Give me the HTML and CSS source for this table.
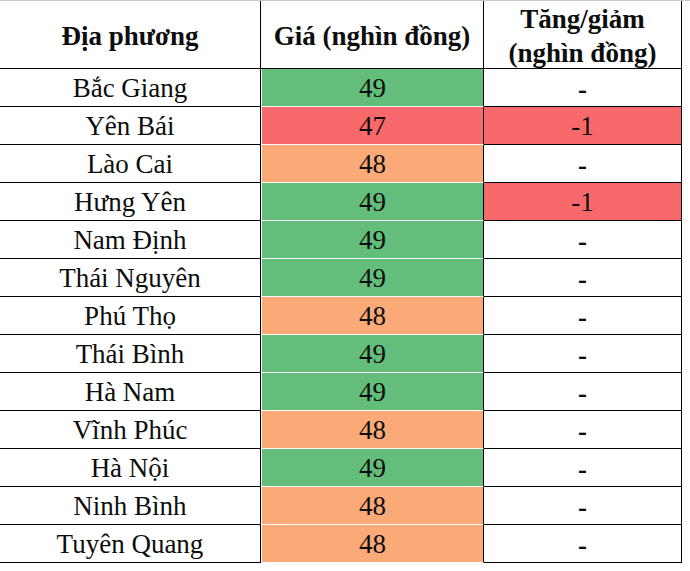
FILE: index.html
```html
<!DOCTYPE html>
<html>
<head>
<meta charset="utf-8">
<link rel="stylesheet" href="styles.css">
</head>
<body>
<div class="sheet">
  <div class="grid">
    <div class="cell c1 head">Địa phương</div>
    <div class="cell c2 head">Giá (nghìn đồng)</div>
    <div class="cell c3 head">Tăng/giảm<br>(nghìn đồng)</div>

    <div class="cell c1">Bắc Giang</div><div class="cell c2 green">49</div><div class="cell c3 dash">-</div>
    <div class="cell c1">Yên Bái</div><div class="cell c2 red">47</div><div class="cell c3 red">-1</div>
    <div class="cell c1">Lào Cai</div><div class="cell c2 orange">48</div><div class="cell c3 dash">-</div>
    <div class="cell c1">Hưng Yên</div><div class="cell c2 green">49</div><div class="cell c3 red">-1</div>
    <div class="cell c1">Nam Định</div><div class="cell c2 green">49</div><div class="cell c3 dash">-</div>
    <div class="cell c1">Thái Nguyên</div><div class="cell c2 green">49</div><div class="cell c3 dash">-</div>
    <div class="cell c1">Phú Thọ</div><div class="cell c2 orange">48</div><div class="cell c3 dash">-</div>
    <div class="cell c1">Thái Bình</div><div class="cell c2 green">49</div><div class="cell c3 dash">-</div>
    <div class="cell c1">Hà Nam</div><div class="cell c2 green">49</div><div class="cell c3 dash">-</div>
    <div class="cell c1">Vĩnh Phúc</div><div class="cell c2 orange">48</div><div class="cell c3 dash">-</div>
    <div class="cell c1">Hà Nội</div><div class="cell c2 green">49</div><div class="cell c3 dash">-</div>
    <div class="cell c1">Ninh Bình</div><div class="cell c2 orange">48</div><div class="cell c3 dash">-</div>
    <div class="cell c1">Tuyên Quang</div><div class="cell c2 orange">48</div><div class="cell c3 dash">-</div>
  </div>
</div>
</body>
</html>
```

FILE: styles.css
```css
html, body {
  margin: 0;
  padding: 0;
  background: #ffffff;
}
.sheet {
  width: 690px;
  height: 571px;
  background: #ffffff;
  border-top: 1px solid #c8c8c8;
  box-sizing: border-box;
}
.grid {
  display: grid;
  grid-template-columns: 261px 223px 198px;
  grid-template-rows: 68px repeat(13, 38px);
  font-family: "Liberation Serif", "Times New Roman", serif;
  font-size: 27px;
  color: #0d0d0d;
}
.cell {
  display: flex;
  align-items: center;
  justify-content: center;
  text-align: center;
  box-sizing: border-box;
  border-bottom: 1px solid #000;
  line-height: 1;
  padding-top: 1px;
}
.c1 {
  border-right: 1px solid #000;
}
.c2 {
  border-right: 1px solid #000;
  border-bottom: 1px solid #fafafa;
}
.c2.head {
  border-bottom: 1px solid #000;
}
.c3 {
  border-right: 1px solid #000;
}
.head {
  font-weight: bold;
  font-size: 27px;
  line-height: 34px;
  padding-top: 2px;
}
.green { background: #63be7b; }
.red { background: #f8696b; }
.orange { background: #fba977; }
.c2.green, .c2.red, .c2.orange {
  border-left: 1px solid #fafafa;
}
.dash {
  font-weight: bold;
  padding-top: 4px;
}
```
